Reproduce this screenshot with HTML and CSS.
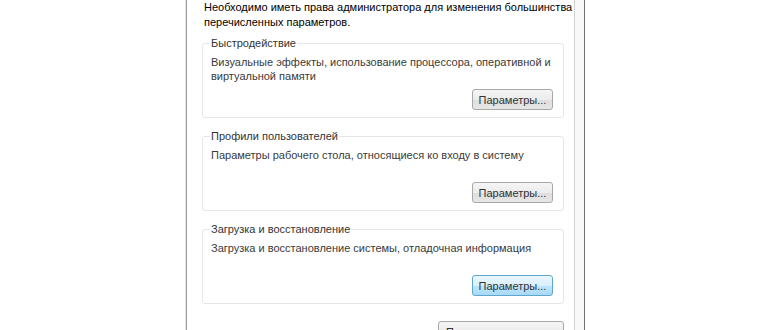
FILE: index.html
```html
<!DOCTYPE html>
<html lang="ru">
<head>
<meta charset="utf-8">
<link rel="stylesheet" href="styles.css">
</head>
<body>
<div class="frame">
  <div class="panel">
    <p class="note">Необходимо иметь права администратора для изменения большинства<br>перечисленных параметров.</p>
    <fieldset class="group">
      <legend>Быстродействие</legend>
      <p class="desc">Визуальные эффекты, использование процессора, оперативной и виртуальной памяти</p>
      <div class="actions"><button class="btn">Параметры...</button></div>
    </fieldset>
    <fieldset class="group">
      <legend>Профили пользователей</legend>
      <p class="desc">Параметры рабочего стола, относящиеся ко входу в систему</p>
      <div class="actions"><button class="btn">Параметры...</button></div>
    </fieldset>
    <fieldset class="group">
      <legend>Загрузка и восстановление</legend>
      <p class="desc">Загрузка и восстановление системы, отладочная информация</p>
      <div class="actions"><button class="btn btn-hot">Параметры...</button></div>
    </fieldset>
    <div class="bottom"><button class="btn btn-wide">Переменные среды...</button></div>
  </div>
  <div class="edge"></div>
</div>
</body>
</html>
```
FILE: styles.css
```css
*, *::before, *::after {
  box-sizing: border-box;
}
html, body {
  margin: 0;
  padding: 0;
  background: #ffffff;
  height: 330px;
  overflow: hidden;
}
body {
  font-family: "Liberation Sans", Arial, sans-serif;
  font-size: 11px;
  color: #222;
}
.frame {
  margin-left: 186px;
  width: 399px;
  height: 340px;
  display: flex;
  border-left: 1px solid #9c9c9c;
  border-right: 1px solid #707070;
  box-shadow: -1px 0 0 #e4e4e4;
}
.panel {
  width: 388px;
  flex: none;
  padding: 0 10px 0 15px;
  border-right: 1px solid #d0d0d0;
  background: #ffffff;
}
.edge {
  flex: 1;
  background: #f8f8f8;
}
.note {
  margin: 0 -12px 0 2px;
  line-height: 15px;
  font-size: 11px;
  white-space: nowrap;
  color: #000;
}
.group {
  margin: 6px 0 0 0;
  padding: 0 8px 7px 8px;
  height: 82px;
  min-width: 0;
  border: 1px solid #e6e6e6;
  border-radius: 3px;
  display: flex;
  flex-direction: column;
}
.group + .group {
  margin-top: 11px;
}
.group legend {
  padding: 0 1px;
  margin-left: -1px;
  line-height: 14px;
  color: #333;
}
.desc {
  margin: 5px 0 0 0;
  line-height: 14px;
  color: #3a3a3a;
}
.actions {
  margin-top: auto;
  display: flex;
  justify-content: flex-end;
  padding-right: 2px;
}
.btn {
  font-family: inherit;
  font-size: 11px;
  color: #333;
  height: 21px;
  width: 81px;
  padding: 0;
  white-space: nowrap;
  border: 1px solid #a8a8a8;
  border-radius: 3px;
  background: linear-gradient(#f5f5f5, #ececec 50%, #dedede 51%, #e6e6e6);
}
.btn-hot {
  border-color: #5fa6cf;
  background: linear-gradient(#eaf6fd, #d9f0fc 50%, #bee6fd 51%, #a7d9f5);
}
.bottom {
  margin-top: 17px;
  display: flex;
  justify-content: flex-end;
}
.btn-wide {
  width: 126px;
}
```
